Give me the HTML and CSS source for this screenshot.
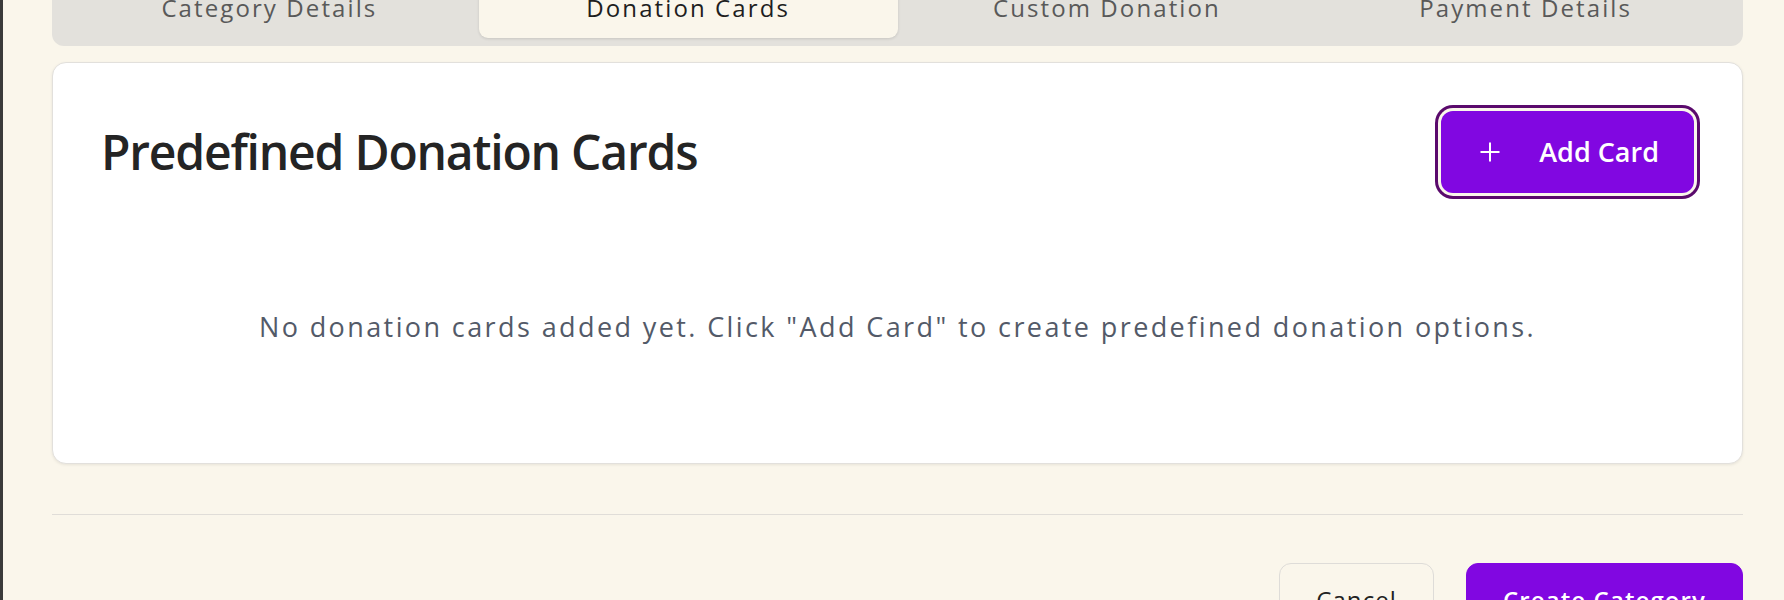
FILE: index.html
```html
<!DOCTYPE html>
<html lang="en">
<head>
<meta charset="utf-8">
<title>Donation Cards</title>
<link rel="stylesheet" href="styles.css">
</head>
<body>
<div class="page">
  <div class="tabs">
    <div class="tab">Category Details</div>
    <div class="tab active">Donation Cards</div>
    <div class="tab">Custom Donation</div>
    <div class="tab">Payment Details</div>
  </div>
  <section class="card">
    <div class="card-header">
      <h2 class="title">Predefined Donation Cards</h2>
      <button class="add-btn" type="button">
        <svg class="plus" width="22" height="22" viewBox="0 0 22 22" aria-hidden="true"><path d="M11 1.5v19M1.5 11h19" stroke="#fff" stroke-width="2" stroke-linecap="butt" fill="none"/></svg>
        <span>Add Card</span>
      </button>
    </div>
    <p class="empty">No donation cards added yet. Click "Add Card" to create predefined donation options.</p>
  </section>
  <div class="footer">
    <button class="btn-cancel" type="button">Cancel</button>
    <button class="btn-create" type="button">Create Category</button>
  </div>
</div>
</body>
</html>
```

FILE: styles.css
```css
* { box-sizing: border-box; }
html, body { margin: 0; padding: 0; }
body {
  background: #faf6eb;
  font-family: "Open Sans", "Noto Sans", sans-serif;
  border-left: 3px solid #3a3a3a;
  min-height: 600px;
  overflow: hidden;
}
.page {
  margin: -30px 41px 0 49px;
}
.tabs {
  display: grid;
  grid-template-columns: repeat(4, 1fr);
  background: #e3e1dc;
  border-radius: 12px;
  padding: 8px;
}
.tab {
  text-align: center;
  font-size: 24px;
  line-height: 36px;
  letter-spacing: 2.1px;
  padding: 12px 0;
  color: #595959;
  border-radius: 9px;
}
.tab.active {
  background: #faf6eb;
  color: #1e1e1e;
  box-shadow: 0 1px 3px rgba(0,0,0,0.12);
}
.card {
  margin-top: 16px;
  background: #fff;
  border: 1px solid #e2e0dc;
  border-radius: 14px;
  box-shadow: 0 1px 3px rgba(0,0,0,0.08);
  padding: 48px;
}
.card-header {
  display: flex;
  justify-content: space-between;
  align-items: center;
  margin-bottom: 42px;
}
.title {
  margin: 0;
  font-size: 48px;
  line-height: 58px;
  font-weight: 600;
  letter-spacing: -1.2px;
  color: #242424;
}
.add-btn {
  display: flex;
  align-items: center;
  gap: 38px;
  background: #8107e1;
  color: #fff;
  border: 0;
  border-radius: 12px;
  padding: 21px 35px 21px 38px;
  font-family: inherit;
  font-size: 27px;
  line-height: 40px;
  font-weight: 600;
  box-shadow: 0 0 0 3px #faf6eb, 0 0 0 6px #5a0a6c;
}
.plus { display: block; }
.empty {
  margin: 0;
  padding: 72px 0 68px;
  text-align: center;
  font-size: 27px;
  line-height: 40px;
  letter-spacing: 2.4px;
  color: #535a68;
}
.footer {
  margin-top: 50px;
  border-top: 1px solid #e0ddd8;
  padding-top: 48px;
  display: flex;
  justify-content: flex-end;
  gap: 32px;
}
.btn-cancel, .btn-create {
  font-family: inherit;
  font-size: 24px;
  line-height: 36px;
  letter-spacing: 1.1px;
  padding: 18px 36px;
  border-radius: 12px;
}
.btn-cancel {
  background: transparent;
  border: 1px solid #dedcd8;
  color: #222;
  font-weight: 500;
}
.btn-create {
  background: #8107e1;
  border: 1px solid #8107e1;
  color: #fff;
  font-weight: 600;
}
```
